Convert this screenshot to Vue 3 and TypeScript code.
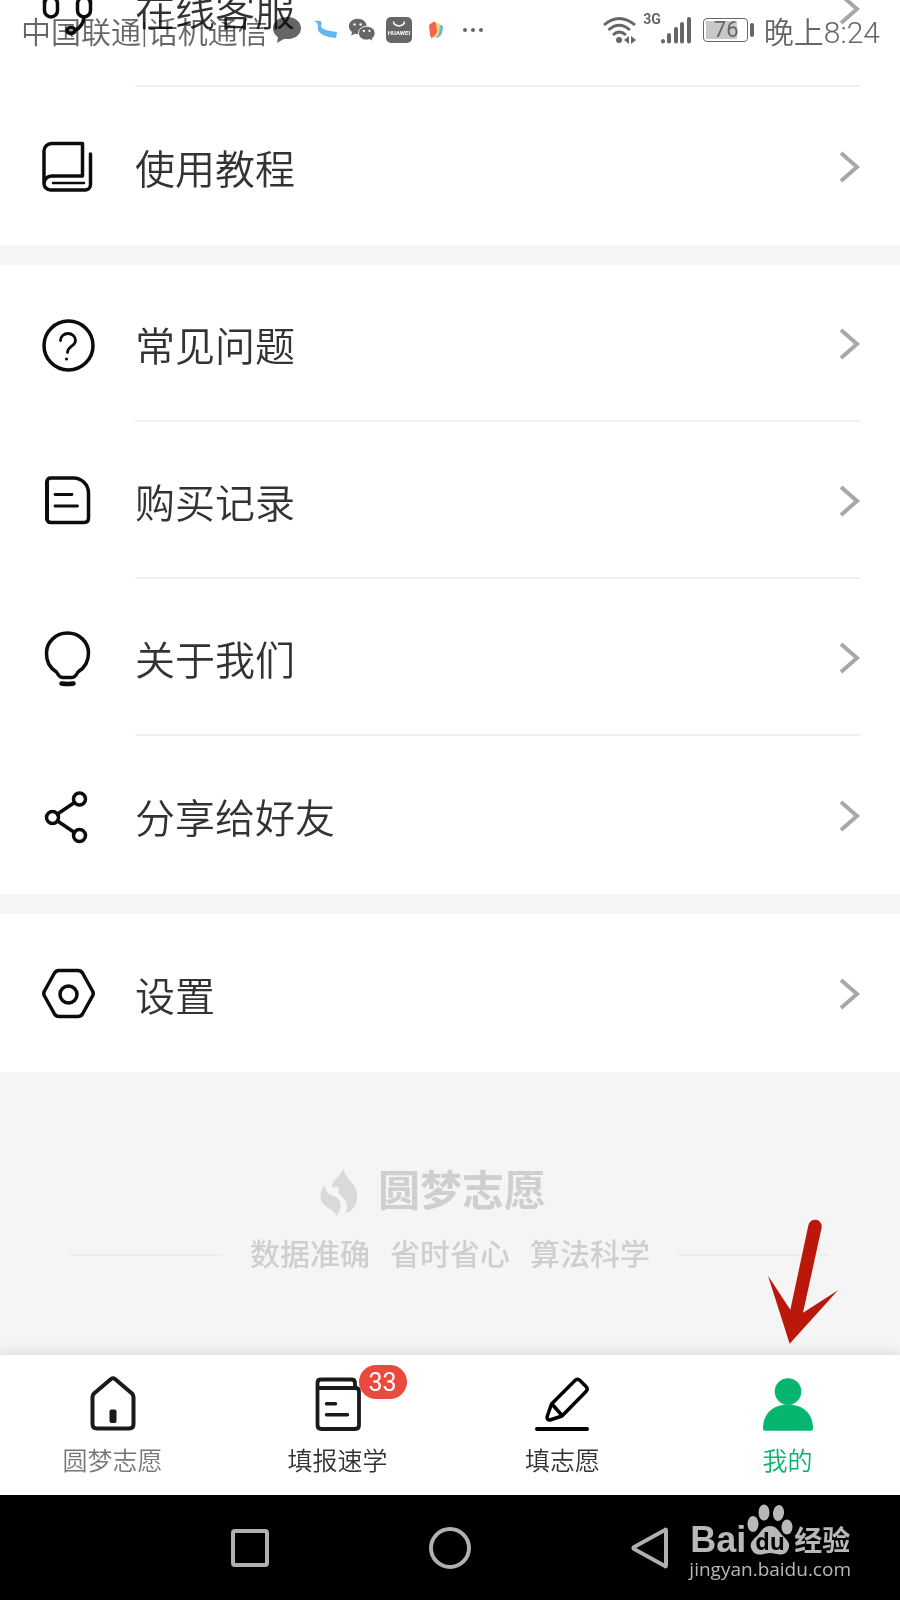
<script setup lang="ts">
interface MenuItem {
  id: string
  label: string
}

interface Tab {
  id: string
  label: string
  badge?: number
}

const groups: MenuItem[][] = [
  [
    { id: 'service', label: '在线客服' },
    { id: 'guide', label: '使用教程' },
  ],
  [
    { id: 'faq', label: '常见问题' },
    { id: 'orders', label: '购买记录' },
    { id: 'about', label: '关于我们' },
    { id: 'share', label: '分享给好友' },
  ],
  [{ id: 'settings', label: '设置' }],
]

const tabs: Tab[] = [
  { id: 'home', label: '圆梦志愿' },
  { id: 'learn', label: '填报速学', badge: 33 },
  { id: 'fill', label: '填志愿' },
  { id: 'mine', label: '我的' },
]

const slogans: string[] = ['数据准确', '省时省心', '算法科学']
</script>

<template>
  <div class="screen">
    <header class="status">
      <span class="carrier">中国联通|话机通信</span>
      <div class="notices">
        <svg width="30" height="28" viewBox="0 0 30 28">
          <path d="M15 1C7 1 1 5.500 1 12.500c0 4 2 6.700 5 8.800L5 27l7-4c11 1 17-4.500 17-10.500C29 5.500 23 1 15 1Z" fill="#666" />
        </svg>
        <svg width="26" height="20" viewBox="0 0 26 20">
          <path d="M2 1c6-1 9 0 7 4-1 4 7 6 16 7l-1 6C13 17 4 13 6 7c0-3-1-5-4-6Z" fill="#64b5f0" />
        </svg>
        <svg width="28" height="26" viewBox="0 0 30 26">
          <path d="M10.500 1C5 1 1 4.500 1 9c0 2.500 1.300 4.700 3.300 6.200L3.500 19l4-2c1 .3 2 .4 3 .4C16 17.400 20 14 20 9.200S16 1 10.500 1Z" fill="#666" />
          <path d="M20 9c-5 0-8.800 3.200-8.800 7.400s3.900 7.400 8.800 7.400c1.200 0 2.300-.2 3.300-.5l3.500 1.900-.8-3.200c1.900-1.400 3-3.400 3-5.600C29 12.200 25 9 20 9Z" fill="#666" stroke="#fff" stroke-width="1" />
          <g fill="#fff">
            <circle cx="7" cy="7" r="1.300" /><circle cx="13.500" cy="7" r="1.300" />
            <circle cx="17" cy="14" r="1.200" /><circle cx="23" cy="14" r="1.200" />
          </g>
        </svg>
        <svg width="26" height="26" viewBox="0 0 26 26">
          <rect width="26" height="26" rx="5" fill="#666" />
          <path d="M7.500 4.500a5.500 4.500 0 0 0 11 0" fill="none" stroke="#fff" stroke-width="1.500" />
          <text x="13" y="18" text-anchor="middle" class="store">HUAWEI</text>
        </svg>
        <svg class="books" width="16" height="18" viewBox="0 0 16 18">
          <path d="M8 3l5 1q2 0 2 3l-1 5q-1 4-6 5Z" fill="#65b8ee" />
          <path d="M6 2l4 0q2 1 2 3l-1 7q-1 4-6 5Z" fill="#fadb58" />
          <path d="M1 4l4-3q3-1 3 2l1 7q0 2-2 4l-3 3q-1 1-2-3Z" fill="#f4635b" />
        </svg>
        <svg class="more" width="22" height="6" viewBox="0 0 22 6" fill="#666">
          <circle cx="3" cy="3" r="2" /><circle cx="11" cy="3" r="2" /><circle cx="19" cy="3" r="2" />
        </svg>
      </div>
      <div class="signals">
        <svg width="33" height="28" viewBox="0 0 33 28">
          <g fill="none" stroke="#666" stroke-width="2.800">
            <path d="M1 9Q16-4 32 9" /><path d="M5.500 14Q16 4.500 27 14" /><path d="M10 19Q16 13 23 19" />
          </g>
          <circle cx="16" cy="24" r="3" fill="#666" />
          <path d="M26 20v8l-5-4ZM28 20v8l5-4Z" fill="#666" />
        </svg>
        <span class="net">3G</span>
        <svg width="30" height="28" viewBox="0 0 30 28" stroke="#666" stroke-width="4" stroke-linecap="round">
          <path d="M2 25v.500M8 19v6.500M15 13v12.500M21 8v17.500M28 3v22.500" />
        </svg>
        <div class="battery"><span>76</span></div>
        <time class="clock">晚上8:24</time>
      </div>
    </header>

    <main class="menu">
      <ul v-for="(group, index) in groups" :key="index" class="group">
        <li v-for="item in group" :key="item.id">
          <a class="row" href="#">
            <svg class="icon" viewBox="0 0 54 54" aria-hidden="true">
              <template v-if="item.id === 'service'">
                <path d="M3.500 20a23 23 0 0 1 46 0" />
                <rect x="3.500" y="14" width="13" height="20" rx="6.500" />
                <rect x="36.500" y="14" width="13" height="20" rx="6.500" />
                <path d="M43 34q-1 10-9 13" />
                <ellipse cx="30" cy="47.500" rx="4" ry="3" />
              </template>
              <template v-else-if="item.id === 'guide'">
                <path d="M3 44V11a7.500 7.500 0 0 1 7.500-7.500h31V36h-31A7.500 7.500 0 0 0 3 43.500a6.500 6.500 0 0 0 6.500 6.500H44a5.500 5.500 0 0 0 5.500-5.500V14" />
                <path d="M12 43h31" stroke-width="2.500" />
              </template>
              <template v-else-if="item.id === 'faq'">
                <circle cx="27.500" cy="27.500" r="24.500" />
                <path d="M19.500 22.500a7.500 7 0 0 1 15 0c0 6-8 5.500-8 12" stroke-width="2.800" />
                <circle cx="25.500" cy="41" r="1.600" class="solid" />
              </template>
              <template v-else-if="item.id === 'orders'">
                <path d="M10 3h22a15 15 0 0 1 15.500 15v25q0 4.500-4.500 4.500H10q-4 0-4-4V7q0-4 4-4Z" />
                <path d="M6 7v37" stroke-width="4" />
                <path d="M14 19.500h17M14 31h22.500" stroke-width="2.800" />
              </template>
              <template v-else-if="item.id === 'about'">
                <path d="M15.500 40Q5 33.500 5.500 21a21 20 0 0 1 42 0Q47.500 33.500 37 40q-3 5.500-6 5.500h-9.500q-3 0-6-5.500Z" />
                <path d="M20.500 51.500q6 1 12 0" stroke-width="4.500" />
              </template>
              <template v-else-if="item.id === 'share'">
                <circle cx="11.500" cy="28.500" r="6" /><circle cx="38.500" cy="10" r="6" /><circle cx="38.500" cy="46.500" r="6" />
                <path d="M16.500 25L33.500 13.500M16.500 32l17 11.500" />
              </template>
              <template v-else>
                <path d="M18 3.500h19q3 0 4.500 2.500L51.500 24q1.500 2.500 0 5L41.500 47q-1.500 2.500-4.500 2.500H18q-3 0-4.500-2.500L3.500 29q-1.500-2.500 0-5L13.500 6q1.500-2.500 4.500-2.500Z" />
                <circle cx="27.500" cy="27.500" r="8.500" />
              </template>
            </svg>
            <span class="body">
              <span>{{ item.label }}</span>
              <svg class="chevron" viewBox="0 0 20 32" aria-hidden="true">
                <path d="M1 2l16 14L1 30" />
              </svg>
            </span>
          </a>
        </li>
      </ul>
    </main>

    <section class="brand">
      <div class="brand-name">
        <svg width="38" height="48" viewBox="0 0 38 48">
          <path d="M23 0C23 7 12 11 12 20q4-2 7 0-2 4 2 8 10 8 4 17C34 43 38 35 37 26 36 15 25 11 23 0Z" />
          <path d="M5 17C0 24-1 30 3 36q4 4 10 7l4 5c4-7 6-14-1-19C9 27 5 24 5 17Z" />
        </svg>
        <strong>圆梦志愿</strong>
      </div>
      <div class="slogan">
        <span v-for="text in slogans" :key="text">{{ text }}</span>
      </div>
      <svg class="arrow" width="70" height="124" viewBox="0 0 210 371">
        <path d="M121 16A20 20 0 0 1 161 22L105 278 210 210 65 371 0 167 67 269Z" />
      </svg>
    </section>

    <nav class="tabs">
      <a v-for="tab in tabs" :key="tab.id" href="#" class="tab" :class="tab.id">
        <span class="tab-icon">
          <svg width="58" height="58" viewBox="0 0 58 58" aria-hidden="true">
            <template v-if="tab.id === 'home'">
              <path d="M8.500 23q0-2 1.500-3.500L27 5q2-1.500 4 0l17 14.500q1.500 1.500 1.500 3.500v27q0 4.500-4.500 4.500H13q-4.500 0-4.500-4.500Z" />
              <rect x="25.500" y="35.500" width="7" height="13.500" rx="2" class="door" />
            </template>
            <template v-else-if="tab.id === 'learn'">
              <path d="M8.500 14V9q0-3.500 3.500-3.500h30.500q3.500 0 3.500 3.500v5M8.500 14h38q3.500 0 3.500 3.500V51q0 4-4 4H12.500q-4 0-4-4Z" stroke-width="3.800" />
              <path d="M17.500 29.700h9M17.500 40.700h21" stroke-width="3.500" />
            </template>
            <template v-else-if="tab.id === 'fill'">
              <path d="M17.500 30L41 6.500q2.500-2.500 5 0l6 6q2.500 2.500 0 5L28 42l-12 4q-3 0-3-3ZM18 30l10 11.500" stroke-width="3.500" />
              <path d="M3 55h50" />
            </template>
            <template v-else>
              <circle cx="29" cy="17.500" r="13.300" />
              <path d="M29 30.500c15 0 25 9 25 24q0 2.200-2 2.200H6q-2 0-2-2.200c0-15 10-24 25-24Z" />
            </template>
          </svg>
          <span v-if="tab.badge" class="badge">{{ tab.badge }}</span>
        </span>
        <span>{{ tab.label }}</span>
      </a>
    </nav>

    <footer class="system">
      <button type="button" aria-label="Recent apps">
        <svg width="44" height="44" viewBox="0 0 44 44"><rect x="5" y="5" width="34" height="34" rx="2" /></svg>
      </button>
      <button type="button" aria-label="Home">
        <svg width="44" height="44" viewBox="0 0 44 44"><circle cx="22" cy="22" r="19" /></svg>
      </button>
      <button type="button" aria-label="Back">
        <svg width="44" height="44" viewBox="0 0 44 44"><path d="M37 4q1-1 1 1v34q0 2-1 1L6 23q-1-1 0-2Z" /></svg>
      </button>
      <div class="watermark">
        <div class="mark">
          <span class="bai">Bai</span>
          <svg width="48" height="52" viewBox="0 0 48 52">
            <ellipse cx="7" cy="20" rx="5.500" ry="8" /><ellipse cx="18" cy="8.500" rx="5.500" ry="8" />
            <ellipse cx="32.500" cy="9" rx="5.500" ry="8" transform="rotate(8 32.500 9)" /><ellipse cx="41" cy="23" rx="5.500" ry="7.500" />
            <path d="M24 22c-7 0-9 6-13 10-6 5-8 9-5 14 4 8 12 3 18 3s14 5 18-3c3-6 0-9-5-14-4-4-6-10-13-10Z" />
            <text x="24" y="46" text-anchor="middle">du</text>
          </svg>
          <span class="exp">经验</span>
        </div>
        <span class="url">jingyan.baidu.com</span>
      </div>
    </footer>
  </div>
</template>

<style>
body {
  margin: 0;
}
</style>

<style scoped>
.screen {
  position: relative;
  display: flex;
  flex-direction: column;
  min-height: 100vh;
  overflow: hidden;
  background: #f5f5f5;
  color: #333;
  font-family: Roboto, "Noto Sans CJK SC", sans-serif;
}

svg {
  display: block;
  flex: none;
  overflow: visible;
}

a {
  color: inherit;
  text-decoration: none;
}

/* The status bar is translucent and lies over the scrolled list. */
.status {
  position: absolute;
  top: 0;
  left: 0;
  right: 0;
  z-index: 2;
  display: flex;
  align-items: center;
  height: 60px;
  padding: 0 20px 0 21px;
  color: #666;
  font-size: 30px;
  font-weight: 350;
  mix-blend-mode: multiply;
}

.notices {
  display: flex;
  align-items: center;
  gap: 10px;
  margin-left: 4px;
}

.books {
  margin-left: 6px;
}

.more {
  margin-left: 8px;
}

.store {
  fill: #fff;
  font: 700 6px Roboto, sans-serif;
}

.signals {
  display: flex;
  align-items: center;
  margin-left: auto;
}

.net {
  align-self: flex-start;
  margin-left: 7px;
  padding-top: 3px;
  font-size: 14px;
  font-weight: 700;
  line-height: 16px;
}

.battery {
  position: relative;
  box-sizing: border-box;
  width: 45px;
  height: 24px;
  margin: 0 16px 0 12px;
  padding: 2px;
  border: 1px solid #666;
  border-radius: 4px;
}

.battery::after {
  content: "";
  position: absolute;
  top: 4px;
  right: -7px;
  width: 4px;
  height: 14px;
  border-radius: 2px;
  background: #666;
}

.battery span {
  display: block;
  width: 31px;
  padding-left: 8px;
  box-sizing: border-box;
  background: #c8c8c8;
  font-size: 22px;
  font-weight: 400;
  line-height: 18px;
}

.menu {
  display: flex;
  flex-direction: column;
  gap: 20px;
  margin-top: -70px;
}

.group {
  margin: 0;
  padding: 0;
  background: #fff;
  list-style: none;
}

.row {
  display: flex;
  align-items: center;
  gap: 40px;
  min-height: 154px;
  padding: 3px 40px 0 41px;
  font-size: 40px;
  font-weight: 350;
}

.icon {
  width: 54px;
  height: 54px;
  fill: none;
  stroke: #0c0c0c;
  stroke-width: 3.5;
  stroke-linecap: round;
  stroke-linejoin: round;
}

.icon .solid {
  fill: #0c0c0c;
  stroke: none;
}

.body {
  display: flex;
  flex: 1;
  align-self: stretch;
  align-items: center;
  justify-content: space-between;
  border-bottom: 2px solid #f0f0f0;
}

li:last-child .row {
  min-height: 157px;
  padding-top: 1px;
}

li:last-child .body {
  border-bottom: 0;
}

.chevron {
  width: 20px;
  height: 32px;
  fill: none;
  stroke: #a8a8a8;
  stroke-width: 4;
}

.brand {
  position: relative;
  flex: 1;
  padding: 90px 71px 0;
  color: #cfcfcf;
}

.brand-name {
  display: flex;
  align-items: center;
  justify-content: center;
  gap: 20px;
  padding-right: 34px;
  font-size: 42px;
  line-height: 60px;
}

.brand-name svg {
  fill: #d9d9d9;
}

.slogan {
  display: flex;
  align-items: center;
  gap: 20px;
  margin-top: 12px;
  font-size: 30px;
  font-weight: 500;
  line-height: 42px;
}

.slogan::before,
.slogan::after {
  content: "";
  flex: 1;
  height: 2px;
  background: #ececec;
}

.slogan::before {
  margin-right: 8px;
}

.slogan::after {
  margin-left: 8px;
}

.arrow {
  position: absolute;
  right: 62px;
  bottom: 11px;
  fill: #ba180b;
}

.tabs {
  display: grid;
  grid-template-columns: repeat(4, 1fr);
  min-height: 140px;
  background: #fff;
  box-shadow: 0 -2px 12px rgba(0, 0, 0, 0.12);
}

.tab {
  display: flex;
  flex-direction: column;
  align-items: center;
  gap: 15px;
  padding-top: 19px;
  font-size: 25px;
  font-weight: 350;
  line-height: 30px;
}

.tab-icon {
  position: relative;
}

.tab-icon svg {
  fill: none;
  stroke: #1a1a1a;
  stroke-width: 4;
  stroke-linecap: round;
  stroke-linejoin: round;
}

.tab-icon .door {
  fill: #1a1a1a;
  stroke: none;
}

.tab.home {
  color: #777;
}

.tab.fill svg {
  stroke: #000;
}

.tab.mine {
  color: #06b56e;
}

.tab.mine svg {
  fill: #06b56e;
  stroke: none;
}

.badge {
  position: absolute;
  top: -9px;
  left: 50px;
  width: 48px;
  padding-top: 2px;
  border-radius: 17px;
  background: #ea4a3e;
  color: #fff;
  font-size: 25px;
  font-weight: 400;
  line-height: 32px;
  text-align: center;
}

.system {
  position: relative;
  display: grid;
  grid-template-columns: repeat(3, 1fr);
  min-height: 105px;
  padding: 0 16.6%;
  background: #000;
}

.system button {
  display: flex;
  align-items: center;
  justify-content: center;
  padding: 0;
  border: 0;
  background: none;
}

.system button svg {
  fill: none;
  stroke: #b0b0b0;
  stroke-width: 4;
}

.watermark {
  position: absolute;
  top: 9px;
  right: 49px;
  color: #b8b8b8;
}

.mark {
  display: flex;
  align-items: flex-end;
  justify-content: center;
  height: 52px;
}

.mark svg {
  fill: #b8b8b8;
}

.mark text {
  fill: #000;
  font: 700 23px "Open Sans", sans-serif;
}

.bai {
  font: 700 36px/32px "Liberation Sans", sans-serif;
}

.exp {
  font-size: 28px;
  font-weight: 700;
  line-height: 28px;
}

.url {
  display: block;
  font: 400 19px/26px "Open Sans", sans-serif;
}
</style>
